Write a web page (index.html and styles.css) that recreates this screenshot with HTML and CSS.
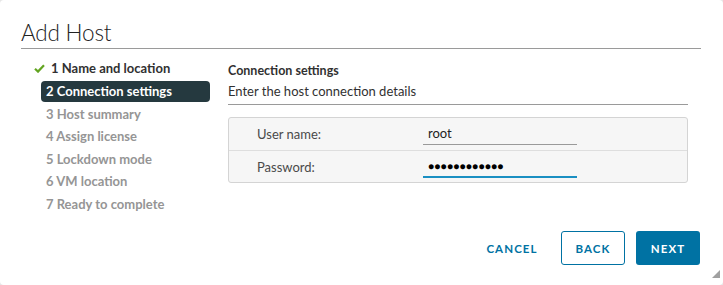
FILE: index.html
```html
<!DOCTYPE html>
<html lang="en">
<head>
  <meta charset="UTF-8">
  <title>Add Host</title>
  <link rel="stylesheet" href="styles.css">
</head>
<body>
  <div class="dialog">
    <header class="dialog-header">
      <h1>Add Host</h1>
    </header>

    <div class="dialog-body">
      <!-- wizard steps -->
      <ul class="steps">
        <li class="step done">
          <svg class="check" width="11" height="9" viewBox="0 0 11 9">
            <path d="M1 4.8 L4 7.6 L10 1.2" fill="none" stroke="#62a420" stroke-width="2.2"/>
          </svg>
          <span>1 Name and location</span>
        </li>
        <li class="step active"><span>2 Connection settings</span></li>
        <li class="step"><span>3 Host summary</span></li>
        <li class="step"><span>4 Assign license</span></li>
        <li class="step"><span>5 Lockdown mode</span></li>
        <li class="step"><span>6 VM location</span></li>
        <li class="step"><span>7 Ready to complete</span></li>
      </ul>

      <!-- step content -->
      <div class="content">
        <h2>Connection settings</h2>
        <p class="desc">Enter the host connection details</p>

        <div class="form-box">
          <div class="form-row">
            <label class="form-label">User name:</label>
            <div class="form-input">root</div>
          </div>
          <div class="form-row">
            <label class="form-label">Password:</label>
            <div class="form-input focused">&#9679;&#9679;&#9679;&#9679;&#9679;&#9679;&#9679;&#9679;&#9679;&#9679;&#9679;&#9679;</div>
          </div>
        </div>
      </div>
    </div>

    <footer class="dialog-footer">
      <button class="btn btn-link">CANCEL</button>
      <button class="btn btn-outline">BACK</button>
      <button class="btn btn-primary">NEXT</button>
    </footer>

    <svg class="resize" width="8" height="8" viewBox="0 0 8 8">
      <path d="M8 0 L8 8 L0 8 Z" fill="#a0a0a0"/>
    </svg>
  </div>
</body>
</html>
```

FILE: styles.css
```css
:root {
  --text: #313131;
  --muted: #959595;
  --active: #25393f;
  --blue: #0072a3;
  --line: #9a9a9a;
  --border: #d4d4d4;
}

* {
  margin: 0;
  padding: 0;
  box-sizing: border-box;
}

body {
  background: #e6e6e6;
  font-family: Lato, "Open Sans", sans-serif;
  color: var(--text);
}

.dialog {
  position: relative;
  width: 723px;
  height: 285px;
  background: #fff;
  border-radius: 4px;
  padding: 19px 22px 0 21px;
  display: flex;
  flex-direction: column;
}

.dialog-header {
  border-bottom: 1px solid var(--line);
  height: 30px;
}

h1 {
  font-size: 22.5px;
  font-weight: 300;
  line-height: 28px;
  letter-spacing: -0.2px;
  color: #222;
}

.dialog-body {
  display: flex;
  padding-top: 8px;
}

.steps {
  list-style: none;
  width: 189px;
  flex-shrink: 0;
  padding-left: 20px;
}

.step {
  display: flex;
  align-items: center;
  height: 22.5px;
  padding-left: 5px;
  font-size: 13px;
  font-weight: 700;
  color: var(--muted);
}

.step.done {
  color: var(--text);
  margin-left: -12px;
}

.step.done .check {
  margin-right: 6px;
}

.step.active {
  background: var(--active);
  color: #fff;
  border-radius: 4px;
  height: 21px;
  margin: 1px 0;
}

.content {
  margin-left: 18px;
  width: 460px;
  padding-top: 6px;
}

h2 {
  font-size: 12.5px;
  font-weight: 700;
  line-height: 16px;
}

.desc {
  font-size: 13px;
  line-height: 18px;
  margin-top: 3px;
  padding-bottom: 4px;
  border-bottom: 1px solid var(--line);
}

.form-box {
  margin-top: 12px;
  border: 1px solid var(--border);
  border-radius: 3px;
  background: #f6f6f6;
}

.form-row {
  display: flex;
  align-items: center;
  height: 32px;
  font-size: 13px;
}

.form-row + .form-row {
  border-top: 1px solid #dedede;
}

.form-label {
  width: 194px;
  padding-left: 28px;
  color: #4a4a4a;
}

.form-input {
  width: 154px;
  height: 22px;
  padding: 2px 5px 0;
  border-bottom: 1px solid var(--line);
  color: #222;
}

.form-input.focused {
  border-bottom: 2px solid #1a8fc2;
  font-size: 10px;
  letter-spacing: 0.3px;
  padding-top: 4px;
  color: #000;
}

.dialog-footer {
  display: flex;
  justify-content: flex-end;
  gap: 11px;
  margin-top: auto;
  margin-bottom: 20px;
  padding-right: 1px;
}

.btn {
  height: 34px;
  font-family: inherit;
  font-size: 11.5px;
  font-weight: 700;
  letter-spacing: 1.1px;
  border-radius: 3px;
  background: none;
  border: 1px solid transparent;
  color: var(--blue);
}

.btn-link {
  width: 76px;
}

.btn-outline {
  width: 64px;
  border-color: var(--blue);
}

.btn-primary {
  width: 64px;
  background: var(--blue);
  color: #fff;
}

.resize {
  position: absolute;
  right: 3px;
  bottom: 7px;
}
```
